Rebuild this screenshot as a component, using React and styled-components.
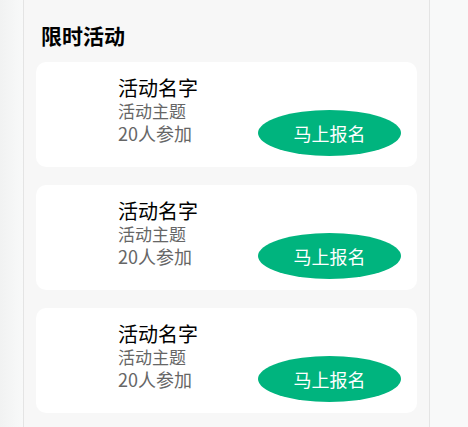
import React from 'react'
import styled, { createGlobalStyle } from 'styled-components'

const activities = [
  { id: 1, name: '活动名字', theme: '活动主题', count: 20 },
  { id: 2, name: '活动名字', theme: '活动主题', count: 20 },
  { id: 3, name: '活动名字', theme: '活动主题', count: 20 }
]

const GlobalStyle = createGlobalStyle`
  html, body {
    margin: 0;
    padding: 0;
    background: #f8f9f9;
    font-family: "Noto Sans CJK SC", "Noto Sans", sans-serif;
  }
`

const App = () => (
  <Page>
    <GlobalStyle />
    <Column>
      <Heading>限时活动</Heading>
      <List>
        {activities.map((item) => (
          <Card key={item.id}>
            <Info>
              <Name>{item.name}</Name>
              <Theme>{item.theme}</Theme>
              <Count>{item.count}人参加</Count>
            </Info>
            <JoinButton type='button'>马上报名</JoinButton>
          </Card>
        ))}
      </List>
    </Column>
  </Page>
)

const Page = styled.div`
  height: 427px;
  overflow: hidden;
  padding-left: 23px;
  background: linear-gradient(to right, #f1f2f2 0, #f8f9f9 23px);
`

const Column = styled.main`
  width: 381px;
  min-height: 427px;
  padding: 21px 12px 0;
  background: #f7f7f7;
  border-left: 1px solid #e4e4e4;
  border-right: 1px solid #e4e4e4;
`

const Heading = styled.h2`
  margin: 0 0 12px 5px;
  font-size: 21px;
  line-height: 29px;
  font-weight: 700;
  color: #000;
`

const List = styled.div`
  display: flex;
  flex-direction: column;
  gap: 18px;
`

const Card = styled.section`
  display: flex;
  justify-content: space-between;
  height: 105px;
  box-sizing: border-box;
  padding: 14px 16px 11px 82px;
  background: #fff;
  border-radius: 10px;
`

const Info = styled.div`
  display: flex;
  flex-direction: column;
`

const Name = styled.span`
  font-size: 20px;
  line-height: 24px;
  color: #000;
`

const Theme = styled.span`
  font-size: 17px;
  line-height: 22px;
  color: #666;
`

const Count = styled.span`
  font-size: 18px;
  line-height: 22px;
  color: #666;
`

const JoinButton = styled.button`
  align-self: flex-end;
  width: 143px;
  height: 46px;
  padding: 0;
  border: none;
  border-radius: 50%;
  background: #00b47e;
  color: #fff;
  font-family: inherit;
  font-size: 18px;
  cursor: pointer;
`

export default App
